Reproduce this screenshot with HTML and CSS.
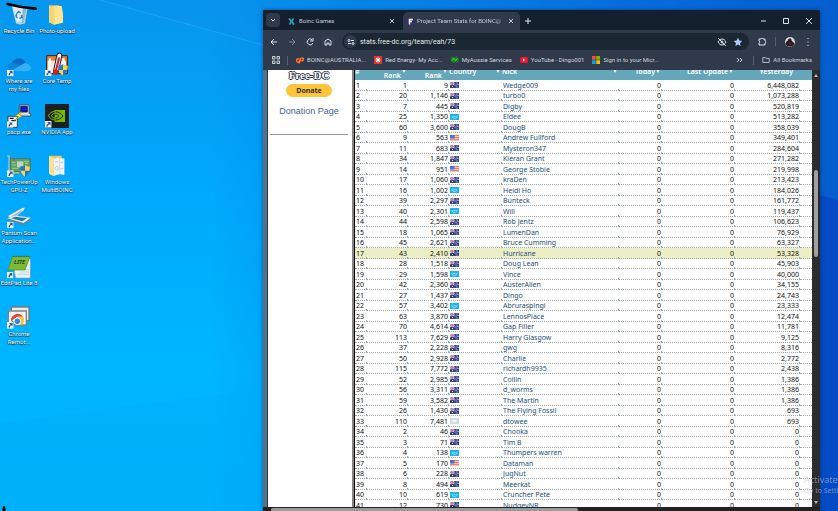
FILE: index.html
```
<!doctype html>
<html lang="en">
<head>
  <meta charset="UTF-8">
  <title>Project Team Stats for BOINC@AUSTRALIA</title>
  <link rel="stylesheet" href="styles.css">
</head>
<body>

  <!-- shared symbols -->
  <svg class="defs" aria-hidden="true">
    <symbol id="au" viewBox="0 0 18 12">
      <path fill="#34458c" d="M0 0h18v12H0z"/>
      <path stroke="#e9d5de" stroke-width="2" d="M0 0l9 6M9 0L0 6M4.500 0v6M0 3h9"/>
      <path stroke="#d0405a" d="M4.500 0v6M0 3h9"/>
      <path fill="#dfe4f4" d="M4 8h2v2H4zM13 1h2v2h-2zM11 5h2v2h-2zM15 4h2v2h-2zM13 9h2v2h-2z"/>
    </symbol>
    <symbol id="un" viewBox="0 0 18 12">
      <path fill="#1cb5f2" d="M0 0h18v12H0z"/>
      <path fill="none" stroke="#9be0fa" stroke-width="2" d="M4 4c0 3 2 5 5 5s5-2 5-5M7 5h4"/>
    </symbol>
    <symbol id="us" viewBox="0 0 18 12">
      <path fill="#f7c5c4" d="M0 0h18v12H0z"/>
      <path stroke="#ee7a76" stroke-width="2" d="M0 1h18M0 5h18M0 9h18"/>
      <path fill="#4973cf" d="M0 0h9v7H0z"/>
    </symbol>
    <symbol id="xx" viewBox="0 0 18 12">
      <path fill="#d3dceb" d="M0 0h18v12H0z"/>
      <path fill="#f4f7fc" d="M5 4h8v4H5z"/>
    </symbol>
    <symbol id="link" viewBox="0 0 18 18">
      <path fill="#f4f6f8" d="M0 0h18v18H0z"/>
      <path fill="#2059a8" d="M6 3h9v9l-3-3c-3 1-4 3-4 6H4c0-4 2-7 5-9z"/>
    </symbol>
    <symbol id="shield" viewBox="0 0 32 36">
      <path fill="#1e79cf" d="M16 1c5 4 9 4 14 4 1 14-4 24-14 30C6 29 1 19 2 5c5 0 9 0 14-4z"/>
      <path fill="#ffd04a" d="M16 1c5 4 9 4 14 4 0 5 0 9-1 13H16zM16 18v17C9 31 5 25 3 18z"/>
    </symbol>
    <symbol id="close" viewBox="0 0 10 10"><path d="M3 3l4 4M7 3L3 7"/></symbol>
  </svg>

  <svg class="wallpaper" viewBox="0 0 838 511" preserveAspectRatio="none" aria-hidden="true">
    <path fill="#0b8fea" opacity=".3" d="M100 0l163 45L838 200V0z"/>
    <path stroke="#4dbcff" opacity=".35" d="M100 0l163 45"/>
    <path fill="#00aef8" opacity=".5" d="M0 423l263-34v122H0z"/>
    <ellipse cx="4" cy="510" rx="1.500" ry="4"/>
  </svg>

  <nav class="desktop">
    <a href="#bin">
      <svg viewBox="0 0 72 72">
        <path fill="#b9d6e6" d="M14 8l48 4-8 49c-8 4-20 5-27 0z"/>
        <path fill="#e2edf2" d="M18 10l40 4-6 40-23 2z"/>
        <path fill="#8db8d2" d="M47 16l11-2-7 45-7 2z"/>
        <path fill="none" stroke="#1478cf" stroke-width="4" d="M29 32l6-7 6 5M43 36l2 7-8 3M31 45l-4-6 2-6"/>
        <path fill="none" stroke="#000" stroke-width="8" stroke-linecap="round" d="M2 3c22 6 48 12 84 14"/>
      </svg>
      Recycle Bin
    </a>
    <a href="#onedrive">
      <svg viewBox="0 0 72 72">
        <path fill="#0f6ac4" d="M14 31c6-17 30-23 43-3L35 46z"/>
        <path fill="#0b84dc" d="M1 43c2-12 13-17 23-12l25 12-34 12C6 56 0 51 1 43z"/>
        <path fill="#35b0f2" d="M12 54l37-22c14-4 23 6 22 14-1 6-6 9-12 9z"/>
        <use href="#link" x="0" y="50" width="20" height="20"/>
      </svg>
      Where are<br>my files
    </a>
    <a href="#pscp">
      <svg viewBox="0 0 72 72">
        <path fill="#d8d8d8" stroke="#333" stroke-width="2" d="M37 3h29v25h5v8H37z"/>
        <path fill="#1515d8" stroke="#000" stroke-width="2" d="M41 7h20v17H41z"/>
        <path fill="#f3f3f3" stroke="#111" stroke-width="2" d="M3 37h28v33H3z"/>
        <path stroke="#111" stroke-width="4" d="M8 43h12M13 50h13M7 57h10"/>
        <path fill="#ffea15" stroke="#554" d="M44 22L25 36l10 2-15 12 27-14-9-3z"/>
        <use href="#link" x="0" y="52" width="19" height="19"/>
      </svg>
      pscp.exe
    </a>
    <a href="#gpuz">
      <svg viewBox="0 0 72 72">
        <path fill="#5ca263" stroke="#436750" stroke-width="2" d="M10 14h60v39H10z"/>
        <path fill="#aebdb3" d="M1 4h7v61H4V9H1z"/>
        <path fill="#c8d0ca" d="M30 22h19v18H30z"/>
        <path stroke="#a0d099" stroke-width="3" d="M15 25h10M15 33h12M52 22h14M54 28h10M15 43h18"/>
        <path stroke="#d13b38" stroke-width="4" d="M19 18h6"/>
        <path fill="#d0b449" d="M18 54h19v5H18z"/>
        <use href="#link" x="0" y="49" width="20" height="20"/>
        <use href="#shield" x="37" y="32" width="34" height="37"/>
      </svg>
      TechPowerUp<br>GPU-Z
    </a>
    <a href="#scan">
      <svg viewBox="0 0 72 72">
        <path fill="#f1f2f2" stroke="#9da9b1" d="M3 33L46 9l8-1-4 8-34 27z"/>
        <path fill="#a5b9c5" d="M13 34L47 13l-7 10-23 15z"/>
        <path fill="#e8eef1" stroke="#8998a1" d="M1 40l21-9 50 7-22 17z"/>
        <path fill="#147bad" d="M13 40l12-5 35 5-14 9z"/>
        <path fill="#70818e" d="M1 41l49 14 22-16v5L50 60 1 46z"/>
        <use href="#link" x="0" y="50" width="20" height="20"/>
      </svg>
      Pantum Scan<br>Application...
    </a>
    <a href="#editpad">
      <svg viewBox="0 0 72 72">
        <path fill="#edf3f5" stroke="#8aa5b0" stroke-width="2" d="M15 12h55v57H26z"/>
        <path stroke="#abc5d2" stroke-width="2" d="M43 44h23M38 51h28M31 58h35"/>
        <path fill="#79bb37" stroke="#4f8922" stroke-width="2" d="M17 5h52L54 45H2z"/>
        <path stroke="#355b27" stroke-width="4" stroke-dasharray="2 3" d="M18 4h51"/>
        <text class="lite" x="21" y="26">LITE</text>
        <use href="#link" x="0" y="51" width="19" height="19"/>
      </svg>
      EditPad Lite 8
    </a>
    <a href="#remote">
      <svg viewBox="0 0 72 72">
        <path fill="#ededed" stroke="#737b80" stroke-width="4" d="M13 3h53v41H13z"/>
        <path fill="#f4f4f4" stroke="#838383" stroke-width="4" d="M4 15h54v42H4z"/>
        <path fill="#e24839" d="M12 46a20 20 0 0 1 36-14H31z"/>
        <path fill="#fac52c" d="M31 32h18c4 9 2 18-4 25H35z"/>
        <path fill="#30a05a" d="M12 40l20 17H18z"/>
        <circle cx="31" cy="46" r="10" fill="#3683e9" stroke="#fff" stroke-width="3"/>
        <use href="#link" x="0" y="48" width="20" height="20"/>
      </svg>
      Chrome<br>Remot...
    </a>
    <a href="#photo">
      <svg viewBox="0 0 72 72">
        <path fill="#efc75d" d="M12 7h31v53l-16 5-15-7z"/>
        <path fill="#ffe393" d="M26 9h24l4 24v26l-28 6z"/>
        <path fill="#f6d373" d="M12 8l16 5v52l-16-7z"/>
      </svg>
      Photo-upload
    </a>
    <a href="#coretemp">
      <svg viewBox="0 0 72 72">
        <path fill="#f47932" stroke="#232323" stroke-width="3" d="M5 8h62v54H5z"/>
        <path fill="#fbe9df" d="M8 23h55v36H8z"/>
        <path stroke="#fff" stroke-width="7" d="M15 16v42M55 16v24"/>
        <path stroke="#222" stroke-width="18" stroke-linecap="round" d="M43 8L33 55"/>
        <path stroke="#f5f5ed" stroke-width="12" stroke-linecap="round" d="M43 8L33 55"/>
        <path stroke="#d61e20" stroke-width="6" stroke-linecap="round" d="M42 16L32 56"/>
        <circle cx="32" cy="57" r="8" fill="#d61e20"/>
        <use href="#link" x="0" y="50" width="20" height="20"/>
        <use href="#shield" x="37" y="33" width="34" height="36"/>
      </svg>
      Core Temp
    </a>
    <a href="#nvidia">
      <svg viewBox="0 0 72 72">
        <path fill="#1d2020" d="M0 0h72v72H0z"/>
        <path fill="#76b900" d="M29 18h31v36H29z"/>
        <path fill="none" stroke="#1d2020" stroke-width="3" d="M30 23c13 0 19 7 24 13-6 8-13 12-24 12M30 30c7 0 10 3 12 6-3 4-6 6-12 6"/>
        <path fill="none" stroke="#76b900" stroke-width="3" d="M33 21c-13 1-19 7-23 13 4 9 11 14 23 14M33 27c-8 1-11 4-14 8 3 5 7 7 14 7"/>
        <use href="#link" x="0" y="51" width="20" height="20"/>
      </svg>
      NVIDIA App
    </a>
    <a href="#multiboinc">
      <svg viewBox="0 0 72 72">
        <path fill="#efc75d" d="M12 5h38v51l-24 10-14-7z"/>
        <path fill="#f1f4f4" stroke="#bdc9cc" d="M25 14l18-5 3 51-20 5zM43 12l15 1v50l-14-3z"/>
        <path fill="none" stroke="#a6b3b8" stroke-width="2" d="M30 25l9-3M30 43c4-8 10-8 10 0s-8 8-10 0M47 25h7M47 44h7"/>
        <path fill="#ffe393" d="M12 6l14 6v54l-14-7z"/>
      </svg>
      Windows<br>MultiBOINC
    </a>
  </nav>

  <main class="window">
    <header class="titlebar">
      <button class="tab-search" aria-label="Search tabs"><svg viewBox="0 0 10 10"><path d="M3 4l2 2 2-2"/></svg></button>
      <div class="tab">
        <svg class="favicon" viewBox="0 0 14 14"><path stroke="#20c489" stroke-width="3" d="M2 1l10 12"/><path stroke="#3396e8" stroke-width="3" d="M11 1L3 13"/></svg>
        <span>Boinc Games</span>
        <button aria-label="Close Boinc Games"><svg><use href="#close"/></svg></button>
      </div>
      <div class="tab active">
        <svg class="favicon" viewBox="0 0 14 14"><path fill="#342b86" d="M0 0h14v14H0z"/><path fill="none" stroke="#fff" stroke-width="3" d="M5 13V3h7M5 7h5"/></svg>
        <span>Project Team Stats for BOINC@</span>
        <button aria-label="Close Project Team Stats"><svg><use href="#close"/></svg></button>
      </div>
      <button class="new-tab" aria-label="New tab"><svg viewBox="0 0 10 10"><path d="M5 2v6M2 5h6"/></svg></button>
      <div class="controls">
        <button aria-label="Minimize"><svg viewBox="0 0 10 10"><path d="M3 5h5"/></svg></button>
        <button aria-label="Maximize"><svg viewBox="0 0 10 10"><path d="M2.500 2.500h5v5h-5z"/></svg></button>
        <button aria-label="Close"><svg viewBox="0 0 10 10"><path d="M2 2l6 6M8 2L2 8"/></svg></button>
      </div>
    </header>

    <div class="toolbar">
      <button aria-label="Back"><svg viewBox="0 0 10 10"><path d="M8 5H2M5 2L2 5l3 3"/></svg></button>
      <button class="dim" aria-label="Forward"><svg viewBox="0 0 10 10"><path d="M2 5h6M5 2l3 3-3 3"/></svg></button>
      <button aria-label="Reload"><svg viewBox="0 0 10 10"><path d="M8 6a3 3 0 1 1-1-3.500M8 1v3H5"/></svg></button>
      <button aria-label="Home"><svg viewBox="0 0 10 10"><path d="M2 4l3-2 3 2v4H6V6H4v2H2z"/></svg></button>
      <div class="omnibox">
        <button class="site" aria-label="Site information"><svg viewBox="0 0 10 10"><path d="M5 3.500h3M2 6.500h3"/><circle cx="3" cy="3.500" r="1"/><circle cx="7" cy="6.500" r="1"/></svg></button>
        <input aria-label="Address" value="stats.free-dc.org/team/eah/73">
        <button aria-label="Tracking protection"><svg viewBox="0 0 10 10"><path d="M1 5c2-4 6-4 8 0-2 4-6 4-8 0M1 1l8 8"/><circle cx="5" cy="5" r="1"/></svg></button>
        <button class="star" aria-label="Edit bookmark"><svg viewBox="0 0 10 10"><path d="M5 .8l1.300 2.800 3 .3-2.300 2 .7 3.100L5 7.400 2.300 9 3 5.900l-2.300-2 3-.3z"/></svg></button>
      </div>
      <button class="ext" aria-label="Extensions"><svg viewBox="0 0 10 10"><path d="M2 2h2c0-1 2-1 2 0h2v2c1 0 1 2 0 2v2H2V6c1 0 1-2 0-2z"/></svg></button>
      <i class="rule"></i>
      <button class="profile" aria-label="Profile"><svg viewBox="0 0 20 20"><circle cx="10" cy="10" r="10" fill="#d8d8da"/><path fill="#251b23" d="M1 14c1-6 4-5 5-8 1-4 7-4 7 0s5 3 6 8a10 10 0 0 1-18 0z"/><path fill="#6b2429" d="M9 11h3v5H9z"/></svg></button>
      <button class="menu" aria-label="Menu"><svg viewBox="0 0 10 10"><path d="M5 1v1M5 4.500v1M5 8v1"/></svg></button>
    </div>

    <nav class="bookmarks">
      <button class="apps" aria-label="Apps"><svg viewBox="0 0 10 10"><path d="M1.500 1.500h2.500v2.500H1.500zM6 1.500h2.500v2.500H6zM1.500 6h2.500v2.500H1.500zM6 6h2.500v2.500H6z"/></svg></button>
      <i class="rule"></i>
      <a href="#boinc"><svg viewBox="0 0 16 16"><path fill="none" stroke="#ff6c24" stroke-width="3" d="M7 6c-5-1-6 1-6 3 0 4 6 4 7-1s7-5 7-1c0 3-4 3-6 2M8 7L6 15"/></svg>BOINC@AUSTRALIA...</a>
      <a href="#red"><svg viewBox="0 0 16 16"><path fill="#e23731" d="M0 0h16v16H0z"/><path stroke="#fff" stroke-width="2" d="M8 3v10M3 8h10M4 4l8 8M12 4l-8 8"/></svg>Red Energy- My Acc...</a>
      <a href="#aussie"><svg viewBox="0 0 16 16"><path fill="#168329" d="M0 3l5-2 3 2 3-3 5 7-3 7-4-2-3 2-6-3z"/><path fill="none" stroke="#63ca44" stroke-width="2" d="M2 9l4-4 3 4 4-4"/></svg>MyAussie Services</a>
      <a href="#youtube"><svg viewBox="0 0 16 16"><rect y="2" width="16" height="12" rx="3" fill="#f4122f"/><path fill="#fff" d="M6 5l5 3-5 3z"/></svg>YouTube - Dingo001</a>
      <a href="#microsoft"><svg viewBox="0 0 16 16"><path fill="#f25022" d="M0 0h7.500v7.500H0z"/><path fill="#7fba00" d="M8.500 0H16v7.500H8.500z"/><path fill="#00a4ef" d="M0 8.500h7.500V16H0z"/><path fill="#ffb900" d="M8.500 8.500H16V16H8.500z"/></svg>Sign in to your Micr...</a>
      <button class="more" aria-label="More bookmarks"><svg viewBox="0 0 10 10"><path d="M2 3l2 2-2 2M5 3l2 2-2 2"/></svg></button>
      <i class="rule"></i>
      <a href="#all"><svg class="folder" viewBox="0 0 10 10"><path d="M1 2h3l1 1h4v5H1z"/></svg>All Bookmarks</a>
    </nav>

    <div class="page">
      <aside>
        <div class="logo">Free-DC</div>
        <button class="donate">Donate</button>
        <a href="#donation">Donation Page</a>
        <hr>
      </aside>
      <section class="stats">
        <table>
          <colgroup>
            <col class="c-no"><col class="c-rank"><col class="c-rank"><col class="c-country"><col>
            <col class="c-today"><col class="c-update"><col class="c-yesterday"><col class="c-end">
          </colgroup>
          <thead>
            <tr>
              <th><div>#</div></th>
              <th><div class="right rank"><span>Rank</span><i></i></div></th>
              <th><div class="right rank"><span>Rank</span><i></i></div></th>
              <th><div>Country<i></i></div></th>
              <th><div>Nick<i></i></div></th>
              <th><div class="right">Today<i></i></div></th>
              <th><div class="right">Last Update<i></i></div></th>
              <th><div class="right sorted">Yesterday<i></i></div></th>
              <th></th>
            </tr>
          </thead>
          <tbody id="rows"></tbody>
        </table>
      </section>
      <div class="vscroll"><b class="up"></b><span></span><b class="down"></b></div>
    </div>
    <div class="hscroll"><span></span></div>
  </main>

  <div class="watermark"><p>Activate</p><p>Go to Settings</p></div>

  <script>
    (function () {

      // team rank, overall rank, flag, nick, yesterday
      var members = [
        ['1', '9', 'au', 'Wedge009', '6,448,082'],
        ['20', '1,146', 'au', 'turbo0', '1,073,288'],
        ['7', '445', 'au', 'Digby', '520,819'],
        ['25', '1,350', 'un', 'Eldee', '513,282'],
        ['60', '3,600', 'au', 'DougB', '358,039'],
        ['9', '563', 'us', 'Andrew Fullford', '349,401'],
        ['11', '683', 'au', 'Mysteron347', '284,604'],
        ['34', '1,847', 'au', 'Kieran Grant', '271,282'],
        ['14', '951', 'us', 'George Stobie', '219,998'],
        ['17', '1,060', 'au', 'kraDen', '213,423'],
        ['16', '1,002', 'un', 'Heidi Ho', '184,026'],
        ['39', '2,297', 'au', 'Bunteck', '161,772'],
        ['40', '2,301', 'un', 'Will', '119,437'],
        ['44', '2,598', 'au', 'Rob Jentz', '106,623'],
        ['18', '1,065', 'au', 'LumenDan', '76,929'],
        ['45', '2,621', 'au', 'Bruce Cumming', '63,327'],
        ['43', '2,410', 'au', 'Hurricane', '53,328'],
        ['28', '1,518', 'au', 'Doug Lean', '45,903'],
        ['29', '1,598', 'un', 'Vince', '40,000'],
        ['42', '2,360', 'au', 'AusterAlien', '34,155'],
        ['27', '1,437', 'au', 'Dingo', '24,743'],
        ['57', '3,402', 'un', 'Abruraspingi', '23,333'],
        ['63', '3,870', 'au', 'LennosPlace', '12,474'],
        ['70', '4,614', 'au', 'Gap Filler', '11,781'],
        ['113', '7,629', 'au', 'Harry Glasgow', '9,125'],
        ['37', '2,228', 'au', 'gwg', '8,316'],
        ['50', '2,928', 'au', 'Charlie', '2,772'],
        ['115', '7,772', 'au', 'richardh9935', '2,438'],
        ['52', '2,985', 'au', 'Collin', '1,386'],
        ['56', '3,311', 'au', 'd_worms', '1,386'],
        ['59', '3,582', 'au', 'The Martin', '1,386'],
        ['26', '1,430', 'au', 'The Flying Fossil', '693'],
        ['110', '7,481', 'xx', 'dtowee', '693'],
        ['2', '46', 'au', 'Chooka', '0'],
        ['3', '71', 'au', 'Tim B', '0'],
        ['4', '138', 'un', 'Thumpers warren', '0'],
        ['5', '170', 'us', 'Dataman', '0'],
        ['6', '228', 'au', 'JugNut', '0'],
        ['8', '494', 'au', 'Meerkat', '0'],
        ['10', '619', 'un', 'Cruncher Pete', '0'],
        ['12', '730', 'au', 'NudgeyNR', '0']
      ];

      var html = '';

      members.forEach(function (m, i) {
        html += '<tr' + (m[3] === 'Hurricane' ? ' class="mark"' : '') + '>' +
                '<td>' + (i + 1) + '</td>' +
                '<td class="num">' + m[0] + '</td>' +
                '<td class="num">' + m[1] + '</td>' +
                '<td><svg class="flag"><use href="#' + m[2] + '"/></svg></td>' +
                '<td><a href="#user' + (i + 1) + '">' + m[3] + '</a></td>' +
                '<td class="num">0</td>' +
                '<td class="num">0</td>' +
                '<td class="num">' + m[4] + '</td>' +
                '<td></td></tr>\n';
      });

      document.getElementById('rows').innerHTML = html;

    })();
  </script>
</body>
</html>
```
FILE: styles.css
```
* {box-sizing: border-box;}
body {
  margin: 0;
  height: 100vh;
  overflow: hidden;
  font: 7px/8px "Noto Sans", "Open Sans", sans-serif;
  background:
    linear-gradient(90deg, rgba(4,72,196,0) 25%, #0560d8 75%, #044ac4 100%),
    linear-gradient(#0796ee, #00a8fb 35%, #00b6ff 72%, #00b2fa);
}
a {color: inherit; text-decoration: none;}
button {border: 0; padding: 0; background: none; color: inherit; font: inherit;}
svg {display: block;}
.defs {position: absolute; width: 0; height: 0;}
.wallpaper {position: absolute; top: 0; left: 0; width: 100%; height: 100%;}

/* desktop icons */
.desktop {
  position: absolute;
  top: 0;
  left: 0;
  display: grid;
  grid-auto-flow: column;
  grid-template-rows: 50px 51px 50px 51px 50px 51px 50px;
  grid-auto-columns: 38px;
}
.desktop a {
  display: block;
  padding-top: 3px;
  color: #fff;
  font-family: Roboto, sans-serif;
  font-size: 6px;
  text-align: center;
  white-space: nowrap;
  text-shadow: 0 1px 1px #123, 0 0 1px #123;
}
.desktop svg {width: 24px; height: 24px; margin: 0 auto; overflow: visible;}
.lite {font: italic bold 17px "Noto Sans", sans-serif; fill: #27451c; text-shadow: none;}

/* browser window */
.window {
  position: absolute;
  top: 10px;
  right: 18px;
  bottom: 0;
  left: 263px;
  display: flex;
  flex-direction: column;
  color: #dfe4ea;
  background: #303a4a;
  box-shadow: 0 0 4px rgba(0,20,60,.5);
}
.window button svg {width: 10px; height: 10px; margin: 0 auto; fill: none; stroke: currentColor; stroke-width: 1;}
.titlebar {display: flex; align-items: flex-end; height: 20px; padding-left: 3px; background: #15202e;}
.tab-search {width: 14px; height: 14px; margin: 0 4px 3px 0; border-radius: 4px; background: #303a4a;}
.tab {
  display: flex;
  align-items: center;
  gap: 4px;
  width: 119px;
  height: 18px;
  padding: 0 6px 0 4px;
  font-family: Roboto, sans-serif;
  font-size: 6px;
  color: #c3cad3;
}
.tab.active {gap: 3px; width: 117px; padding-right: 4px; border-radius: 5px 5px 0 0; background: #303a4a;}
.tab span {flex: 1; white-space: nowrap;}
.tab.active span {-webkit-mask-image: linear-gradient(90deg, #000 90%, rgba(0,0,0,.4));}
.favicon {width: 7px; height: 7px;}
.new-tab {width: 16px; height: 18px;}
.controls {display: flex; margin-left: auto;}
.controls button {width: 23px; height: 18px;}

.toolbar {display: flex; align-items: center; height: 20px; padding: 3px 2px 0;}
.toolbar button {width: 18px; height: 16px;}
.toolbar .dim {color: #7d8794;}
.omnibox {
  flex: 1;
  display: flex;
  align-items: center;
  height: 17px;
  margin-left: 5px;
  padding: 0 3px 0 2px;
  border-radius: 9px;
  background: #1b2733;
}
.omnibox input {
  flex: 1;
  min-width: 0;
  padding: 0 3px;
  border: 0;
  outline: 0;
  background: none;
  color: #e4e8ec;
  font: 7px/12px Roboto, sans-serif;
}
.toolbar .site {width: 13px; height: 13px; border-radius: 50%; background: #303a4a;}
.toolbar .omnibox button:not(.site) {width: 16px;}
.window .star svg {fill: #a8cdfa; stroke: none;}
.rule {width: 1px; height: 9px; background: #56606f;}
.toolbar .ext {margin: 0 4px 0 4px;}
.toolbar .profile {width: 27px;}
.window .profile svg {stroke: none;}
.toolbar .menu {width: 10px; margin: 0 5px 0 0;}

.bookmarks {
  display: flex;
  align-items: center;
  gap: 8px;
  height: 20px;
  padding: 0 8px;
  font-family: Roboto, sans-serif;
  font-size: 6px;
  white-space: nowrap;
  color: #d0d6de;
}
.bookmarks a {display: flex; align-items: center; gap: 3px;}
.bookmarks a svg {width: 8px; height: 8px;}
.bookmarks .folder {fill: none; stroke: currentColor;}
.apps {width: 8px;}
.more {margin-left: auto;}

/* stats page */
.page {flex: 1; display: flex; min-height: 0; border-left: 4px solid #56708a; background: #fff;}
aside {
  display: flex;
  flex-direction: column;
  align-items: center;
  width: 87px;
  padding: 0 4px 0 2px;
  border-left: 1px solid #2b3846;
  border-right: 2px solid #858585;
}
.logo {
  height: 14px;
  font: bold 11px/10px "Liberation Serif", serif;
  color: #fff;
  text-shadow: 1px 0 #223048, -1px 0 #223048, 0 1px #223048, 0 -1px #223048;
}
.page .donate {
  width: 46px;
  height: 13px;
  border-radius: 7px;
  background: #ffc439;
  color: #2c2e2f;
  font: bold 7px/13px "Noto Sans", sans-serif;
}
aside a {margin-top: 9px; font: 9px/10px "Liberation Sans", sans-serif; color: #4a6592;}
aside hr {width: 100%; margin: 18px 0 0; border: 0; border-top: 1px solid #999;}

.stats {flex: 1; min-width: 0; overflow: hidden; border-left: 1px solid #000; color: #111;}
table {
  width: 100%;
  margin-top: -8px;
  border-spacing: 0;
  table-layout: fixed;
  font-size: 7px;
  line-height: 9px;
}
.c-no {width: 12px;}
.c-rank {width: 41px;}
.c-country {width: 53px;}
.c-today {width: 43px;}
.c-update {width: 73px;}
.c-yesterday {width: 65px;}
.c-end {width: 12px;}
th {height: 18px; padding: 0; background: #64a7ba; color: #fff; font-weight: 600; text-align: left;}
th div {display: flex; align-items: center; justify-content: space-between; height: 18px; padding: 0 2px 0 0; white-space: nowrap;}
th .right {justify-content: flex-end; gap: 1px;}
th .rank {align-items: flex-end;}
th i {border: 2px solid transparent; border-top: 4px solid #fff; border-bottom: 0;}
th .rank i {align-self: center;}
th .sorted i {border-top-color: #8c83e8;}
td {
  height: 10px;
  padding: 0 1px;
  border-bottom: 1px dotted #a4abad;
  background: linear-gradient(#86aab3, #86aab3) right bottom / 1px 1px no-repeat;
  white-space: nowrap;
}
tr:nth-child(odd) td {height: 11px;}
td:last-child {background: none;}
.num {text-align: right;}
td a {color: #1c4f7c;}
.mark {background: #ebeec4;}
.flag {width: 9px; height: 6px;}

/* scrollbars */
.vscroll {display: flex; flex-direction: column; align-items: center; width: 8px; padding: 4px 0 3px; background: #2c2c2c;}
.vscroll span {width: 4px; height: 87px; margin-top: 93px; border-radius: 2px; background: #a0a0a0;}
.vscroll b {border: 2px solid transparent;}
.vscroll .up {border-top: 0; border-bottom: 3px solid #b5b5b5;}
.vscroll .down {margin-top: auto; border-bottom: 0; border-top: 3px solid #b5b5b5;}
.hscroll {height: 4px; padding: 1px 0 0 8px; background: #222;}
.hscroll span {display: block; width: 56%; height: 3px; border-radius: 2px 2px 0 0; background: #9a9a9a;}

.watermark {
  position: absolute;
  right: 0;
  bottom: 15px;
  width: 34px;
  overflow: hidden;
  white-space: nowrap;
  color: rgba(190,195,205,.6);
  font-size: 7px;
  line-height: 10px;
}
.watermark p {margin: 0;}
.watermark p:first-child {font-size: 9px; line-height: 13px;}
```
